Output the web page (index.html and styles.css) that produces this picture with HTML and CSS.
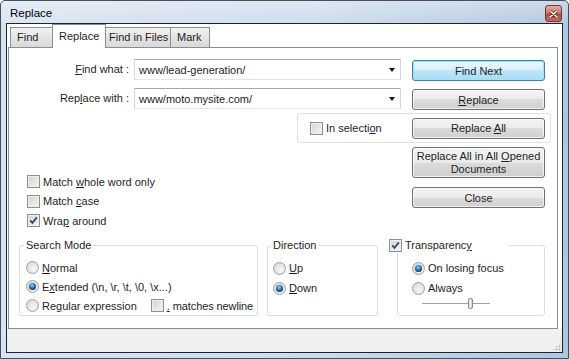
FILE: index.html
```html
<!DOCTYPE html>
<html lang="en">
<head>
    <meta charset="UTF-8">
    <title>Replace</title>
    <link rel="stylesheet" href="styles.css">
</head>
<body>
    <div class="window">
        <div class="titlebar">
            <span class="title">Replace</span>
            <button class="close-btn">
                <svg width="9" height="8" viewBox="0 0 9 8">
                    <path d="M1 1 L8 7 M8 1 L1 7" stroke="#6b2a24" stroke-width="3" stroke-linecap="round"/>
                    <path d="M1 1 L8 7 M8 1 L1 7" stroke="#fff" stroke-width="1.6" stroke-linecap="round"/>
                </svg>
            </button>
        </div>
        <div class="client">
            <div class="tabs">
                <div class="tab tab-find">Find</div>
                <div class="tab tab-replace active">Replace</div>
                <div class="tab tab-files">Find in Files</div>
                <div class="tab tab-mark">Mark</div>
            </div>
            <div class="page">
                <div class="field-row">
                    <span class="field-label"><u>F</u>ind what :</span>
                    <div class="combo"><span>www/lead-generation/</span><i class="combo-arrow"></i></div>
                    <button class="btn btn-default">Find Next</button>
                </div>
                <div class="field-row second">
                    <span class="field-label">Rep<u>l</u>ace with :</span>
                    <div class="combo"><span>www/moto.mysite.com/</span><i class="combo-arrow"></i></div>
                    <button class="btn"><u>R</u>eplace</button>
                </div>
                <div class="selection-box">
                    <label class="check"><span class="box"></span><span>In selecti<u>o</u>n</span></label>
                    <button class="btn">Replace <u>A</u>ll</button>
                </div>
                <div class="mid">
                    <div class="options">
                        <label class="check option"><span class="box"></span><span>Match <u>w</u>hole word only</span></label>
                        <label class="check option"><span class="box"></span><span>Match <u>c</u>ase</span></label>
                        <label class="check option"><span class="box"><svg width="11" height="11" viewBox="0 0 11 11"><path d="M2.2 5.4 L4.4 7.9 L8.9 2.4" fill="none" stroke="#2f4774" stroke-width="1.7"/></svg></span><span>Wra<u>p</u> around</span></label>
                    </div>
                    <div class="side-buttons">
                        <button class="btn btn-tall">Replace All in All <u>O</u>pened<br>Documents</button>
                        <button class="btn">Close</button>
                    </div>
                </div>
                <div class="groups">
                    <fieldset class="group group-mode">
                        <legend>Search Mode</legend>
                        <label class="radio-row"><span class="radio"></span><span><u>N</u>ormal</span></label>
                        <label class="radio-row"><span class="radio on"></span><span>E<u>x</u>tended (\n, \r, \t, \0, \x...)</span></label>
                        <div class="radio-row">
                            <label class="radio-row"><span class="radio"></span><span>Re<u>g</u>ular expression</span></label>
                            <label class="check newline"><span class="box"></span><span><u>.</u> matches newline</span></label>
                        </div>
                    </fieldset>
                    <fieldset class="group group-dir">
                        <legend>Direction</legend>
                        <label class="radio-row tall"><span class="radio"></span><span><u>U</u>p</span></label>
                        <label class="radio-row tall"><span class="radio on"></span><span><u>D</u>own</span></label>
                    </fieldset>
                    <fieldset class="group group-trans">
                        <legend>
                            <label class="check"><span class="box"><svg width="11" height="11" viewBox="0 0 11 11"><path d="M2.2 5.4 L4.4 7.9 L8.9 2.4" fill="none" stroke="#2f4774" stroke-width="1.7"/></svg></span><span>Transparenc<u>y</u></span></label>
                        </legend>
                        <label class="radio-row tall"><span class="radio on"></span><span>On losing focus</span></label>
                        <label class="radio-row tall"><span class="radio"></span><span>Always</span></label>
                        <div class="slider"><span class="thumb"></span></div>
                    </fieldset>
                </div>
            </div>
            <div class="status">
                <span class="grip"></span>
            </div>
        </div>
    </div>
</body>
</html>
```

FILE: styles.css
```css
* {
    box-sizing: border-box;
}

body {
    margin: 0;
    font-family: "Liberation Sans", Arial, sans-serif;
    font-size: 11px;
    color: #1e1e1e;
    background: #fff;
}

u {
    text-decoration: underline;
    text-underline-offset: 1px;
}

.window {
    width: 569px;
    height: 359px;
    display: flex;
    flex-direction: column;
    border: 1px solid #46505c;
    border-radius: 5px 5px 0 0;
    background:
        linear-gradient(to bottom, rgba(255, 255, 255, 0.35), rgba(255, 255, 255, 0) 26px),
        linear-gradient(to right, #d9e4f1 0%, #cddbeb 55%, #b0c6df 100%);
}

.titlebar {
    height: 22px;
    display: flex;
    align-items: flex-start;
    padding: 4px 6px 0 9px;
}

.title {
    font-size: 11.5px;
    line-height: 16px;
    color: #000;
}

.close-btn {
    margin-left: auto;
    width: 17px;
    height: 17px;
    padding: 0;
    display: flex;
    align-items: center;
    justify-content: center;
    border: 1px solid #6e3b36;
    border-radius: 3px;
    background: linear-gradient(to bottom, #e3aea6 0%, #d17c70 45%, #b9473b 55%, #c8665a 100%);
}

.client {
    margin-left: 5px;
    width: 557px;
    height: 330px;
    display: flex;
    flex-direction: column;
    border: 1px solid #1f2226;
    background: #fff;
}

/* tabs */

.tabs {
    height: 23px;
    display: flex;
    align-items: flex-end;
    padding-left: 3px;
}

.tab {
    height: 20px;
    line-height: 19px;
    padding-left: 6px;
    border: 1px solid #898c95;
    border-bottom: none;
    background: linear-gradient(to bottom, #f3f3f3, #e4e4e4 50%, #d9d9d9);
    color: #1e1e1e;
    white-space: nowrap;
}

.tab + .tab {
    margin-left: -1px;
}

.tab-find {
    width: 43px;
}

.tab-replace {
    width: 54px;
}

.tab-files {
    width: 66px;
    padding-left: 3px;
}

.tab-mark {
    width: 40px;
}

.tab.active {
    position: relative;
    z-index: 2;
    height: 24px;
    line-height: 22px;
    margin-bottom: -1px;
    background: #fff;
}

.page {
    flex: 0 0 282px;
    margin: 0 4px 0 1px;
    border: 1px solid #898c95;
    background: #fff;
}

/* find / replace fields */

.field-row {
    display: flex;
    align-items: flex-start;
    margin-top: 11px;
}

.field-row.second {
    margin-top: 7px;
}

.field-label {
    width: 120px;
    margin-right: 5px;
    line-height: 21px;
    text-align: right;
}

.combo {
    width: 267px;
    height: 21px;
    display: flex;
    align-items: center;
    padding-left: 4px;
    border: 1px solid;
    border-color: #a4a7ad #d3d6dc #e0e4ea #d3d6dc;
    background: #fff;
}

.combo-arrow {
    margin-left: auto;
    margin-right: 5px;
    border-left: 3.5px solid transparent;
    border-right: 3.5px solid transparent;
    border-top: 4px solid #111;
}

.btn {
    width: 133px;
    height: 21px;
    padding: 0;
    font: inherit;
    color: #1e1e1e;
    border: 1px solid #707070;
    border-radius: 3px;
    background: linear-gradient(to bottom, #f3f3f3 0%, #ebebeb 50%, #dcdcdc 50%, #cfcfcf 100%);
    box-shadow: inset 0 0 0 1px rgba(255, 255, 255, 0.7);
}

.field-row .btn {
    margin-left: 11px;
    margin-top: 1px;
}

.btn-default {
    border-color: #3c7fb1;
    background: linear-gradient(to bottom, #eaf7fd 0%, #d8f0fb 50%, #bfe6f9 50%, #a8dcf4 100%);
    box-shadow: inset 0 0 0 1px #9fe3fb;
}

.btn-tall {
    height: 31px;
    line-height: 13px;
}

.selection-box {
    margin: 3px 0 0 288px;
    width: 254px;
    height: 30px;
    display: flex;
    align-items: center;
    justify-content: space-between;
    padding: 0 5px 0 12px;
    border: 1px solid #dde3e8;
    border-radius: 3px;
}

/* checkboxes and radios */

.check {
    display: flex;
    align-items: center;
    gap: 3px;
    white-space: nowrap;
}

.box {
    width: 13px;
    height: 13px;
    flex: none;
    display: inline-flex;
    align-items: center;
    justify-content: center;
    border: 1px solid #8f8f8f;
    background: linear-gradient(135deg, #d2d2d2, #f6f6f6);
    box-shadow: inset 0 0 0 1px #efefef;
}

.radio {
    width: 13px;
    height: 13px;
    flex: none;
    display: inline-flex;
    align-items: center;
    justify-content: center;
    border: 1px solid #a0a0a0;
    border-radius: 50%;
    background: radial-gradient(circle at 60% 65%, #f8f8f8, #d2d2d2);
}

.radio.on::after {
    content: "";
    width: 7px;
    height: 7px;
    border-radius: 50%;
    background: radial-gradient(circle at 45% 35%, #9ad6f6 0, #2f78b8 40%, #0f2d4f 80%);
}

.radio-row {
    height: 19px;
    display: flex;
    align-items: center;
    gap: 3px;
    white-space: nowrap;
}

.radio-row.tall {
    height: 20px;
}

/* middle part */

.mid {
    height: 94px;
    display: flex;
}

.options {
    flex: 1;
    padding: 29px 0 0 18px;
}

.option {
    height: 19.5px;
}

.side-buttons {
    width: 133px;
    margin: 4px 12px 0 0;
    display: flex;
    flex-direction: column;
    gap: 9px;
}

/* group boxes */

.groups {
    display: flex;
    padding-left: 10px;
}

.group {
    margin: 0;
    height: 79px;
    min-width: 0;
    padding: 5px 5px 0 6px;
    border: 1px solid #d5dfe5;
    border-radius: 3px;
}

.group legend {
    padding: 0 2px;
    margin-left: -2px;
    line-height: 16px;
}

.group-mode {
    width: 239px;
}

.newline {
    margin-left: 11px;
    letter-spacing: -0.1px;
}

.group-dir {
    width: 111px;
    margin-left: 9px;
    padding-left: 5px;
}

.group-trans {
    width: 148px;
    margin-left: 19px;
    padding-left: 14px;
}

.group-trans legend {
    margin-left: -23px;
    padding: 0 37px 0 0;
}

.slider {
    position: relative;
    width: 68px;
    height: 11px;
    margin-left: 10px;
    background: linear-gradient(to bottom, transparent 5px, #a3a3a3 5px, #a3a3a3 6px, #fff 6px, #fff 7px, transparent 7px);
}

.thumb {
    position: absolute;
    left: 46px;
    top: 0;
    width: 5px;
    height: 11px;
    border: 1px solid #8a8a8a;
    border-radius: 2px;
    background: linear-gradient(to right, #f6f6f6, #d8d8d8);
}

/* bottom strip */

.status {
    flex: 1;
    display: flex;
    justify-content: flex-end;
    align-items: flex-end;
    background: #f0f0f0;
}

.grip {
    width: 9px;
    height: 9px;
    margin: 0 1px 1px 0;
    background: radial-gradient(circle, #b5b5b5 0.8px, transparent 1.2px) 0 0 / 3px 3px;
    clip-path: polygon(100% 0, 100% 100%, 0 100%);
}
```
